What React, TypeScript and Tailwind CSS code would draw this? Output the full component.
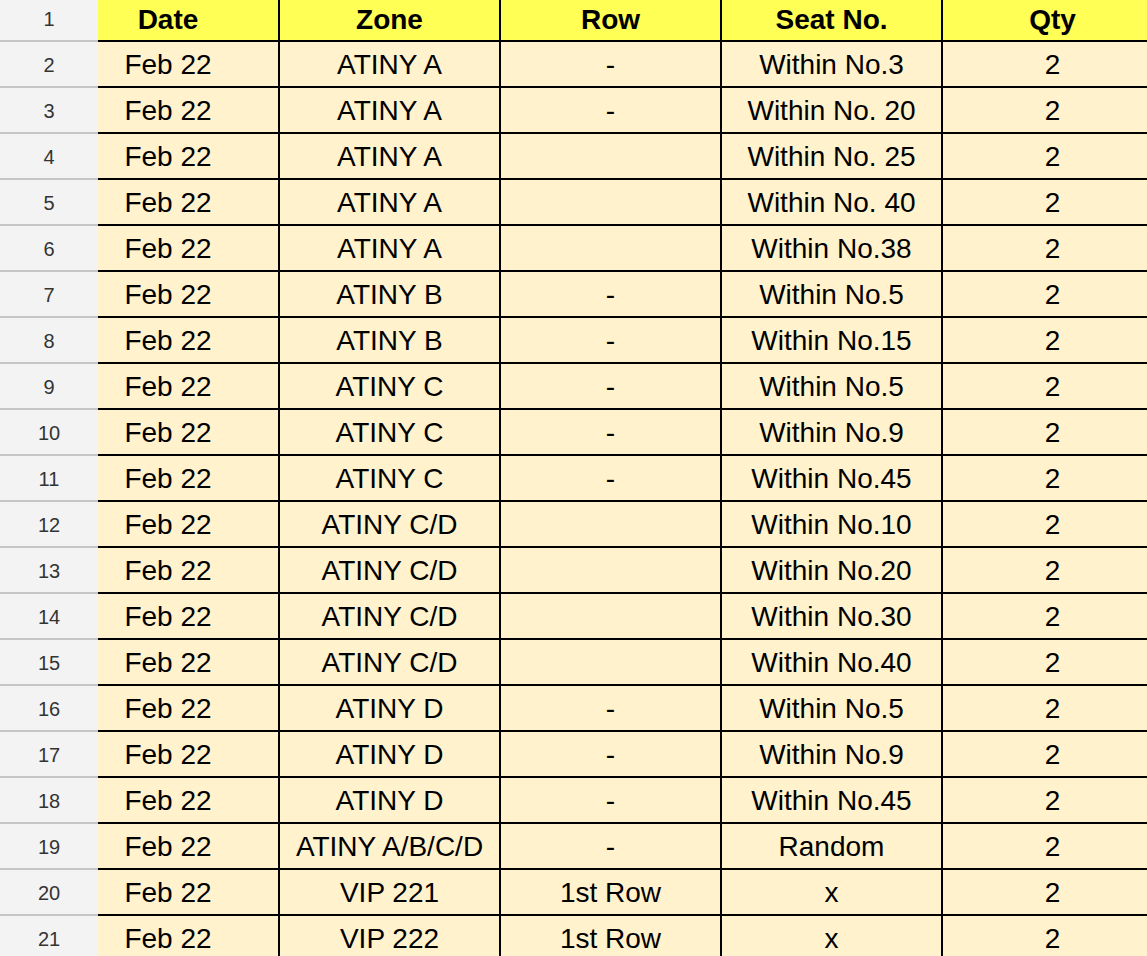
import React from "react";

type Row = [string, string, string];

const rows: Row[] = [
  ["ATINY A", "-", "Within No.3"],
  ["ATINY A", "-", "Within No. 20"],
  ["ATINY A", "", "Within No. 25"],
  ["ATINY A", "", "Within No. 40"],
  ["ATINY A", "", "Within No.38"],
  ["ATINY B", "-", "Within No.5"],
  ["ATINY B", "-", "Within No.15"],
  ["ATINY C", "-", "Within No.5"],
  ["ATINY C", "-", "Within No.9"],
  ["ATINY C", "-", "Within No.45"],
  ["ATINY C/D", "", "Within No.10"],
  ["ATINY C/D", "", "Within No.20"],
  ["ATINY C/D", "", "Within No.30"],
  ["ATINY C/D", "", "Within No.40"],
  ["ATINY D", "-", "Within No.5"],
  ["ATINY D", "-", "Within No.9"],
  ["ATINY D", "-", "Within No.45"],
  ["ATINY A/B/C/D", "-", "Random"],
  ["VIP 221", "1st Row", "x"],
  ["VIP 222", "1st Row", "x"],
];

const rh =
  "h-[46px] flex items-center justify-center bg-[#f3f3f3] border-b-2 border-[#c6c6c6] text-[20px] text-[#333333] pt-[2px]";
const hc =
  "h-[46px] flex items-center justify-center bg-[#ffff55] border-r-2 border-b-2 border-black font-bold text-[28px] text-black pt-[4px]";
const dc =
  "h-[46px] flex items-center justify-center bg-[#fff2cc] border-r-2 border-b-2 border-black text-[28px] text-black whitespace-nowrap pt-[2px]";

export default function App() {
  return (
    <div
      className="w-[1147px] h-[956px] overflow-hidden bg-white"
      style={{ fontFamily: '"Liberation Sans", Arial, sans-serif' }}
    >
      <div className="-mt-[4px] grid grid-cols-[98px_182px_221px_221px_221px_221px] w-[1164px]">
        <div className={rh}>1</div>
        <div className={hc + " pr-[40px]"}>Date</div>
        <div className={hc}>Zone</div>
        <div className={hc}>Row</div>
        <div className={hc}>Seat No.</div>
        <div className={hc}>Qty</div>
        {rows.map((r, i) => (
          <React.Fragment key={i}>
            <div className={rh}>{i + 2}</div>
            <div className={dc + " pr-[40px]"}>Feb 22</div>
            <div className={dc}>{r[0]}</div>
            <div className={dc}>{r[1]}</div>
            <div className={dc}>{r[2]}</div>
            <div className={dc}>2</div>
          </React.Fragment>
        ))}
      </div>
    </div>
  );
}
